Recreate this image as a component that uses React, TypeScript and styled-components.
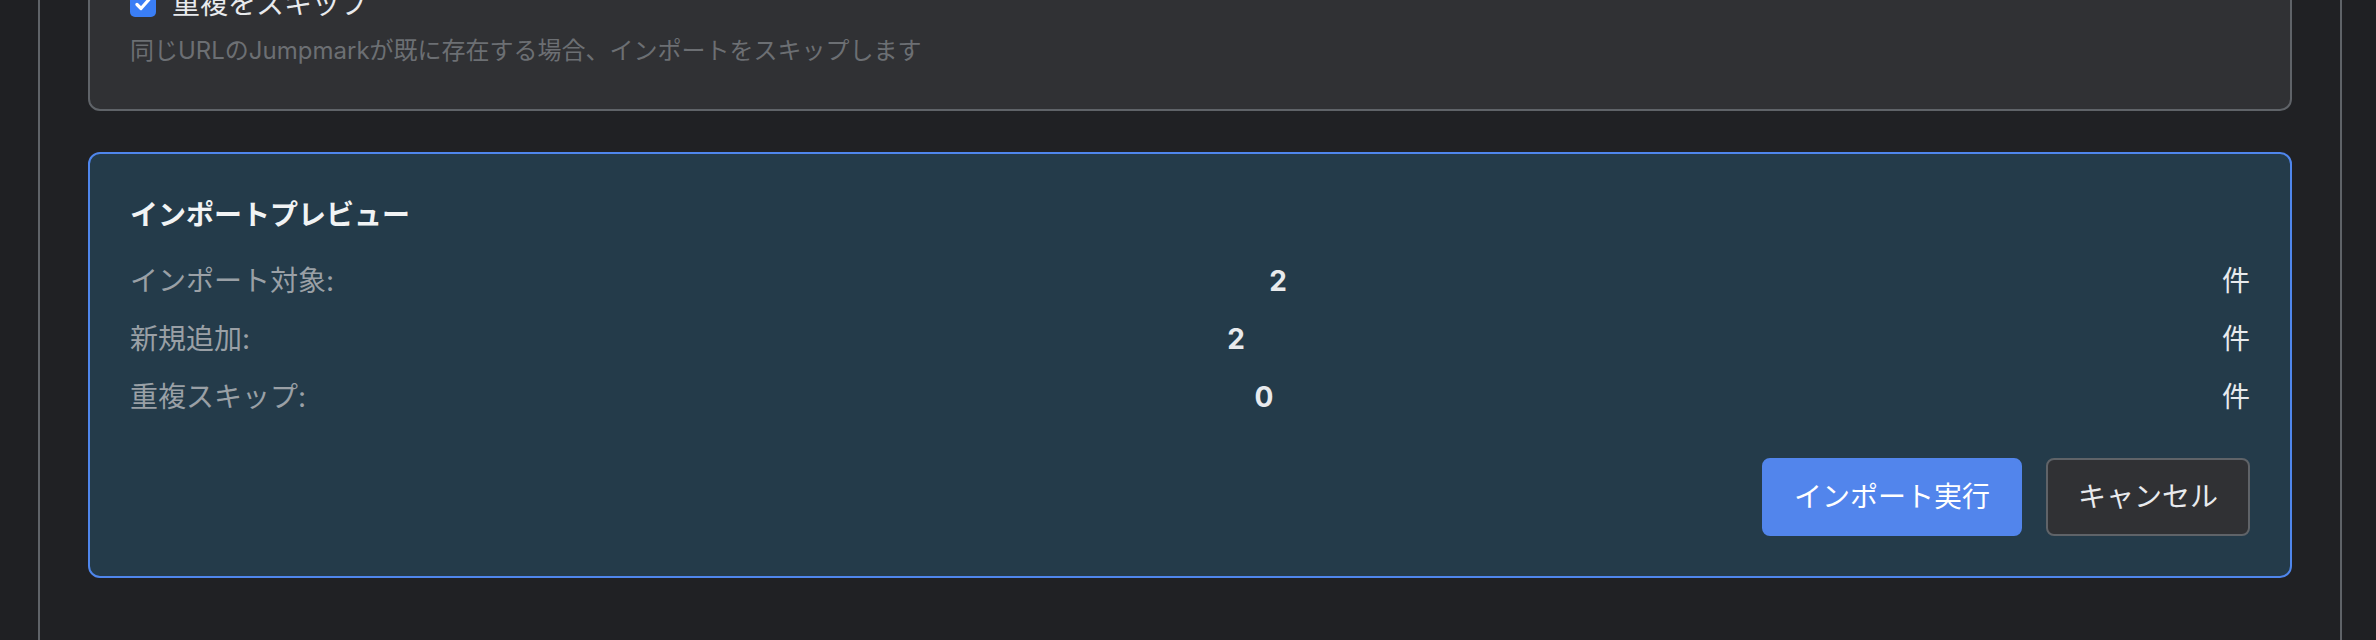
import styled, { createGlobalStyle } from "styled-components";

const GlobalStyle = createGlobalStyle`
    html, body {
        margin: 0;
        padding: 0;
        background: #1f2023;
    }
    body {
        font-family: "Inter", "Noto Sans CJK JP", sans-serif;
        color: #e8eaed;
        overflow: hidden;
    }
`;

const Page = styled.div`
    margin: -59px 0 0 38px;
    width: 2304px;
    box-sizing: border-box;
    min-height: 760px;
    padding: 0 48px 0 48px;
    background: #202124;
    border-left: 2px solid #5f6368;
    border-right: 2px solid #5f6368;
`;

const Card = styled.section<{ $highlight?: boolean }>`
    box-sizing: border-box;
    padding: 40px;
    border-radius: 12px;
    border: 2px solid ${(p) => (p.$highlight ? "#4f86ec" : "#5f6368")};
    background: ${(p) => (p.$highlight ? "#243b4a" : "#303134")};

    & + & {
        margin-top: 41px;
    }
`;

const CheckRow = styled.label`
    display: flex;
    align-items: center;
    gap: 16px;
    font-size: 28px;
    line-height: 42px;
    color: #e8eaed;
`;

const CheckBox = styled.span`
    width: 26px;
    height: 26px;
    border-radius: 5px;
    background: #3a7ef5;
    display: flex;
    align-items: center;
    justify-content: center;
    flex-shrink: 0;
`;

const Hint = styled.p`
    margin: 8px 0 0;
    font-size: 24px;
    line-height: 36px;
    color: #6c6f73;
`;

const Title = styled.h3`
    margin: 0 0 24px;
    font-size: 28px;
    line-height: 42px;
    font-weight: 700;
    color: #f1f3f4;
`;

const Stats = styled.div`
    display: flex;
    flex-direction: column;
    gap: 16px;
`;

const StatRow = styled.div`
    display: flex;
    justify-content: space-between;
    align-items: center;
    font-size: 28px;
    line-height: 42px;
`;

const StatLabel = styled.span`
    color: #9aa0a6;
`;

const StatValue = styled.strong`
    font-weight: 700;
    color: #e8eaed;
`;

const StatUnit = styled.span`
    color: #e8eaed;
`;

const Actions = styled.div`
    display: flex;
    justify-content: flex-end;
    gap: 24px;
    margin-top: 40px;
`;

const Button = styled.button<{ $primary?: boolean }>`
    font-family: inherit;
    font-size: 28px;
    line-height: 42px;
    padding: 16px 30px;
    border-radius: 8px;
    cursor: pointer;
    border: 2px solid ${(p) => (p.$primary ? "#5285ec" : "#5f6368")};
    background: ${(p) => (p.$primary ? "#5285ec" : "#303134")};
    color: ${(p) => (p.$primary ? "#ffffff" : "#e8eaed")};
`;

const stats = [
    { label: "インポート対象:", value: 2 },
    { label: "新規追加:", value: 2 },
    { label: "重複スキップ:", value: 0 }
];

export default function App() {
    return (
        <>
            <GlobalStyle />
            <Page>
                <Card>
                    <CheckRow>
                        <CheckBox>
                            <svg width="20" height="20" viewBox="0 0 20 20" fill="none">
                                <path
                                    d="M4 10.5l4 4 8-9"
                                    stroke="#ffffff"
                                    strokeWidth="3.2"
                                    strokeLinecap="round"
                                    strokeLinejoin="round"
                                />
                            </svg>
                        </CheckBox>
                        重複をスキップ
                    </CheckRow>
                    <Hint>同じURLのJumpmarkが既に存在する場合、インポートをスキップします</Hint>
                </Card>
                <Card $highlight>
                    <Title>インポートプレビュー</Title>
                    <Stats>
                        {stats.map((s) => (
                            <StatRow key={s.label}>
                                <StatLabel>{s.label}</StatLabel>
                                <StatValue>{s.value}</StatValue>
                                <StatUnit>件</StatUnit>
                            </StatRow>
                        ))}
                    </Stats>
                    <Actions>
                        <Button $primary>インポート実行</Button>
                        <Button>キャンセル</Button>
                    </Actions>
                </Card>
            </Page>
        </>
    );
}
